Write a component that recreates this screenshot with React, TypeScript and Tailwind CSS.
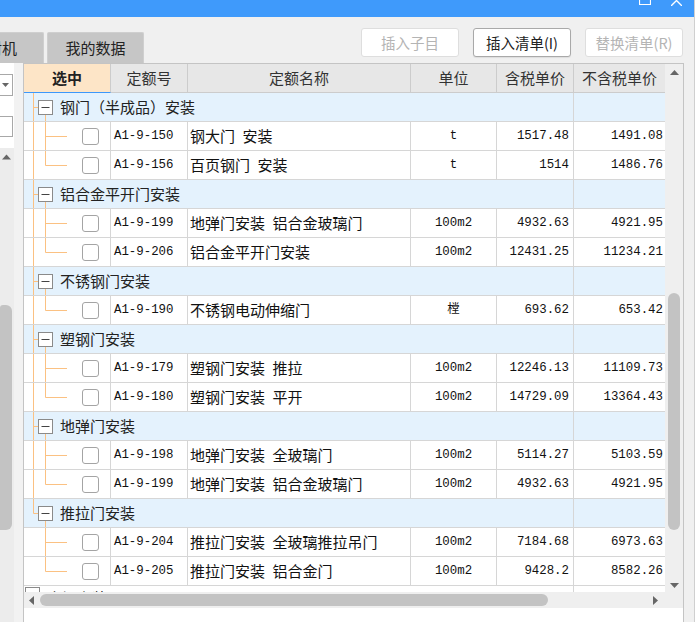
const ORANGE = "#fbc182";

type Item = [string, string, string, string, string];
type Group = { name: string; items: Item[] };

// names use an en space where the list shows a half-width gap
const groups: Group[] = [
  {
    name: "钢门（半成品）安装",
    items: [
      ["A1-9-150", "钢大门\u2002安装", "t", "1517.48", "1491.08"],
      ["A1-9-156", "百页钢门\u2002安装", "t", "1514", "1486.76"],
    ],
  },
  {
    name: "铝合金平开门安装",
    items: [
      ["A1-9-199", "地弹门安装\u2002铝合金玻璃门", "100m2", "4932.63", "4921.95"],
      ["A1-9-206", "铝合金平开门安装", "100m2", "12431.25", "11234.21"],
    ],
  },
  {
    name: "不锈钢门安装",
    items: [["A1-9-190", "不锈钢电动伸缩门", "樘", "693.62", "653.42"]],
  },
  {
    name: "塑钢门安装",
    items: [
      ["A1-9-179", "塑钢门安装\u2002推拉", "100m2", "12246.13", "11109.73"],
      ["A1-9-180", "塑钢门安装\u2002平开", "100m2", "14729.09", "13364.43"],
    ],
  },
  {
    name: "地弹门安装",
    items: [
      ["A1-9-198", "地弹门安装\u2002全玻璃门", "100m2", "5114.27", "5103.59"],
      ["A1-9-199", "地弹门安装\u2002铝合金玻璃门", "100m2", "4932.63", "4921.95"],
    ],
  },
  {
    name: "推拉门安装",
    items: [
      ["A1-9-204", "推拉门安装\u2002全玻璃推拉吊门", "100m2", "7184.68", "6973.63"],
      ["A1-9-205", "推拉门安装\u2002铝合金门", "100m2", "9428.2", "8582.26"],
    ],
  },
];

const cols = "grid grid-cols-[87px_77px_223px_86px_77px_91px]";
const cell = "h-[29px] border-b border-[#d6d6d6] flex items-center";
const mono = "font-['Liberation_Mono','Noto_Sans_CJK_SC',monospace] text-[12.4px] text-[#111]";

function GroupRow({ name, last }: { name: string; last: boolean }) {
  return (
    <div className={cols}>
      <div className={`${cell} col-span-5 border-r bg-[#e4f2fd]`}>
        <svg width="36" height="28" className="shrink-0">
          <line x1="9.5" y1="0" x2="9.5" y2={last ? 14.5 : 28} stroke={ORANGE} />
          <line x1="9.5" y1="14.5" x2="14" y2="14.5" stroke={ORANGE} />
          <line x1="21.5" y1="22" x2="21.5" y2="28" stroke={ORANGE} />
          <rect x="14.5" y="7.5" width="14" height="14" fill="#fff" stroke="#8a8a8a" />
          <line x1="17.5" y1="14.5" x2="25.5" y2="14.5" stroke="#444" />
        </svg>
        <span className="text-[15px] leading-[20px] text-[#222]">{name}</span>
      </div>
      <div className={`${cell} bg-[#e4f2fd]`} />
    </div>
  );
}

function ItemRow({ item, outer, last }: { item: Item; outer: boolean; last: boolean }) {
  const [code, name, unit, p1, p2] = item;
  return (
    <div className={`${cols} bg-white`}>
      <div className={`${cell} border-r`}>
        <svg width="58" height="28" className="shrink-0">
          {outer && <line x1="9.5" y1="0" x2="9.5" y2="28" stroke={ORANGE} />}
          <line x1="21.5" y1="0" x2="21.5" y2={last ? 14.5 : 28} stroke={ORANGE} />
          <line x1="21.5" y1="14.5" x2="43" y2="14.5" stroke={ORANGE} />
        </svg>
        <div className="w-[17px] h-[17px] rounded-[3px] border border-[#a4a4a4] bg-white" />
      </div>
      <div className={`${cell} border-r pl-[3px] ${mono}`}>{code}</div>
      <div className={`${cell} border-r pl-[2px] text-[15px] text-[#111]`}>{name}</div>
      <div className={`${cell} border-r justify-center ${mono}`}>{unit}</div>
      <div className={`${cell} border-r justify-end pr-[4px] ${mono}`}>{p1}</div>
      <div className={`${cell} justify-end pr-[2px] ${mono}`}>{p2}</div>
    </div>
  );
}

function Header() {
  const h = "h-[29px] border-b border-r border-[#cccccc] bg-[#e7e7e7] flex items-center justify-center text-[15px] text-[#333]";
  return (
    <div className={cols}>
      <div className="h-[29px] border-r border-[#cccccc] border-b border-b-[#3d98fa] bg-[#fde5c7] flex items-center justify-center text-[15px] font-bold text-[#222]">
        选中
      </div>
      <div className={h}>定额号</div>
      <div className={h}>定额名称</div>
      <div className={h}>单位</div>
      <div className={h}>含税单价</div>
      <div className={`${h} border-r-0`}>不含税单价</div>
    </div>
  );
}

function Button({ label, enabled }: { label: string; enabled?: boolean }) {
  return (
    <div
      className={`w-[98px] h-[29px] rounded-[3px] bg-white flex items-center justify-center text-[14.5px] ${
        enabled ? "border border-[#a9a9a9] text-[#222] shadow-[0_1px_1px_rgba(0,0,0,0.08)]" : "border border-[#dedede] text-[#b4b4b4]"
      }`}
    >
      {label}
    </div>
  );
}

export default function App() {
  return (
    <div className="w-[700px] h-[622px] overflow-hidden flex bg-[#f0f0f0] font-['Noto_Sans_CJK_SC','Noto_Sans',sans-serif]">
      <div className="w-[694px] flex flex-col">
        {/* title bar */}
        <div className="h-[17px] bg-[#3f9afb] flex justify-end items-start pr-[12px] gap-[20px] overflow-hidden">
          <svg width="12" height="6">
            <path d="M0.5 0 V4.5 H11.5 V0" fill="none" stroke="#fff" strokeWidth="1.2" />
          </svg>
          <svg width="11" height="6">
            <path d="M0 -5 L11 6 M11 -5 L0 6" stroke="#fff" strokeWidth="1.4" />
          </svg>
        </div>

        {/* toolbar */}
        <div className="h-[46px] flex">
          <div className="flex items-end gap-[3px] overflow-hidden">
            <div className="ml-[-45px] w-[89px] h-[31px] rounded-t-[2px] border border-b-0 border-[#cfcfcf] bg-[#c6c6c6] flex items-center justify-end pr-[26px] text-[15px] text-[#222]">
              人材机
            </div>
            <div className="w-[97px] h-[31px] rounded-t-[2px] border border-b-0 border-[#cfcfcf] bg-[#c6c6c6] flex items-center justify-center text-[15px] text-[#222]">
              我的数据
            </div>
          </div>
          <div className="ml-auto mt-[11px] mr-[11px] flex gap-[14px]">
            <Button label="插入子目" />
            <Button label="插入清单(I)" enabled />
            <Button label="替换清单(R)" />
          </div>
        </div>

        {/* content */}
        <div className="flex-1 flex">
          {/* left panel */}
          <div className="w-[23px] flex">
            <div className="w-[14px] flex flex-col">
              <div className="h-[85px] bg-white flex flex-col">
                <div className="mt-[11px] h-[22px] w-[13px] border border-l-0 border-[#a8a8a8] flex items-center pl-[2px]">
                  <svg width="7" height="4">
                    <path d="M0 0 H7 L3.5 4 Z" fill="#666" />
                  </svg>
                </div>
                <div className="mt-[20px] h-[21px] w-[13px] border border-l-0 border-[#a8a8a8]" />
              </div>
              <div className="flex-1 bg-[#ececec] flex flex-col">
                <svg width="14" height="6" className="mt-[6px]">
                  <path d="M2 5.5 L6.5 0.5 L11 5.5 Z" fill="#666" />
                </svg>
                <div className="mt-[145px] h-[225px] w-[12px] rounded-tr-[6px] rounded-tl-[3px] rounded-br-[6px] bg-[#c3c3c3]" />
              </div>
            </div>
            <div className="w-[9px] bg-[#f2f2f2]" />
          </div>

          {/* grid frame */}
          <div className="w-[661px] border-l border-t border-r border-[#c4c4c4] bg-white flex flex-col">
            <div className="h-[544px] flex">
              <div className="w-[641px] flex flex-col">
                <Header />
                <div className="h-[499px] overflow-hidden">
                  {groups.map((g, gi) => {
                    const lastGroup = gi === groups.length - 1;
                    return (
                      <div key={gi}>
                        <GroupRow name={g.name} last={lastGroup} />
                        {g.items.map((it, ii) => (
                          <ItemRow key={ii} item={it} outer={!lastGroup} last={ii === g.items.length - 1} />
                        ))}
                      </div>
                    );
                  })}
                  <div className={cols}>
                    <div className="h-[29px] col-span-5 border-r border-[#d6d6d6] bg-white flex items-start">
                      <svg width="23" height="20" className="shrink-0">
                        <rect x="1.5" y="1.5" width="14" height="14" fill="#fff" stroke="#8a8a8a" />
                      </svg>
                      <span className="mt-[3px] text-[15px] leading-[18px] text-[#222]">木门安装</span>
                    </div>
                    <div className="h-[29px] bg-white" />
                  </div>
                </div>
                {/* horizontal scrollbar */}
                <div className="h-[16px] bg-[#efefef] flex items-center">
                  <svg width="5" height="9" className="ml-[5px]">
                    <path d="M5 0 V9 L0 4.5 Z" fill="#666" />
                  </svg>
                  <div className="ml-[6px] w-[508px] h-[12px] rounded-[6px] bg-[#c3c3c3]" />
                  <svg width="5" height="9" className="ml-auto mr-[7px]">
                    <path d="M0 0 V9 L5 4.5 Z" fill="#666" />
                  </svg>
                </div>
              </div>
              {/* vertical scrollbar */}
              <div className="w-[18px] bg-[#efefef] flex flex-col items-center">
                <svg width="9" height="5" className="mt-[6px]">
                  <path d="M0 5 L4.5 0 L9 5 Z" fill="#666" />
                </svg>
                <div className="mt-[218px] w-[12px] h-[237px] rounded-[6px] bg-[#c3c3c3]" />
                <svg width="9" height="5" className="mt-auto mb-[20px]">
                  <path d="M0 0 H9 L4.5 5 Z" fill="#666" />
                </svg>
              </div>
            </div>
            <div className="flex-1 bg-white" />
          </div>
          <div className="w-[10px]" />
        </div>
      </div>
      <div className="w-[6px] border-l border-[#cfcfcf] bg-white" />
    </div>
  );
}
